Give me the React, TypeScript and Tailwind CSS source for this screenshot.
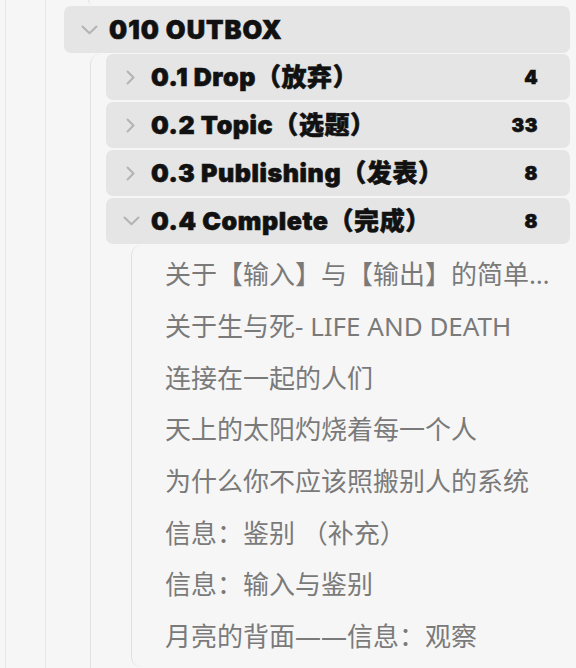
import React from "react";

const titleFont = {
  fontFamily: 'Inter, "Noto Sans CJK SC", sans-serif',
  WebkitTextStroke: "0.6px #111",
} as React.CSSProperties;
const itemFont = { fontFamily: '"Noto Sans", "Noto Sans CJK SC", sans-serif' };

function ChevronDown() {
  return (
    <svg width="17" height="10" viewBox="0 0 17 10" fill="none">
      <path d="M1.5 1.5 L8.5 8.2 L15.5 1.5" stroke="#b3b3b3" strokeWidth="2" strokeLinecap="round" strokeLinejoin="round" />
    </svg>
  );
}

function ChevronRight() {
  return (
    <svg width="17" height="15" viewBox="0 0 17 15" fill="none">
      <path d="M4.5 1.5 L10.5 7.5 L4.5 13.5" stroke="#b3b3b3" strokeWidth="2" strokeLinecap="round" strokeLinejoin="round" />
    </svg>
  );
}

function Row({ title, count, open, big }: { title: string; count?: string; open?: boolean; big?: boolean }) {
  return (
    <div
      className={`flex items-center rounded-[7px] bg-[#e5e5e5] pl-[17px] pr-[32px] ${big ? "h-[47px]" : "h-[46px]"}`}
    >
      <div className="w-[17px] flex items-center justify-center shrink-0">
        {open ? <ChevronDown /> : <ChevronRight />}
      </div>
      <div
        className={`ml-[11px] font-black text-[#111] whitespace-nowrap leading-none ${
          big ? "text-[25.5px] tracking-[1px]" : "text-[25px] tracking-[0.6px]"
        }`}
        style={titleFont}
      >
        {title}
      </div>
      {count && (
        <div className="ml-auto font-black text-[19px] text-[#111] leading-none tracking-[0.5px]" style={titleFont}>
          {count}
        </div>
      )}
    </div>
  );
}

const items = [
  "关于【输入】与【输出】的简单思考",
  "关于生与死- LIFE AND DEATH",
  "连接在一起的人们",
  "天上的太阳灼烧着每一个人",
  "为什么你不应该照搬别人的系统",
  "信息：鉴别 （补充）",
  "信息：输入与鉴别",
  "月亮的背面——信息：观察",
];

export default function App() {
  return (
    <div className="h-[668px] w-[576px] overflow-hidden bg-[#f6f6f6]">
      <div className="ml-[5px] h-full border-l border-[#e7e7e7]">
        <div className="ml-[39px] h-full border-l border-[#e7e7e7]">
          <div className="ml-[42px] h-[5px] w-[20px] rounded-bl-[8px] border-l border-[#e2e2e2]" />
          <div className="ml-[18px] mr-[6px] mt-[1px]">
            <Row title="010 OUTBOX" open big />
          </div>
          <div className="ml-[44px] mt-[1px] h-full rounded-tl-[10px] border-l border-[#e2e2e2] pl-[15px] pr-[6px]">
            <div className="flex flex-col gap-[2px]">
              <Row title="0.1 Drop（放弃）" count="4" />
              <Row title="0.2 Topic（选题）" count="33" />
              <Row title="0.3 Publishing（发表）" count="8" />
              <Row title="0.4 Complete（完成）" count="8" open />
            </div>
            <div className="ml-[25px] mt-[1px] rounded-l-[10px] border-l border-[#e0e0e0] pl-[33px] pt-[4px] pb-[4px] pr-[10px]">
              {items.map((t) => (
                <div
                  key={t}
                  className="h-[51.7px] flex items-center text-[26px] text-[#7a7a7a] whitespace-nowrap overflow-hidden"
                  style={itemFont}
                >
                  <span className="truncate block">{t}</span>
                </div>
              ))}
            </div>
          </div>
        </div>
      </div>
    </div>
  );
}
